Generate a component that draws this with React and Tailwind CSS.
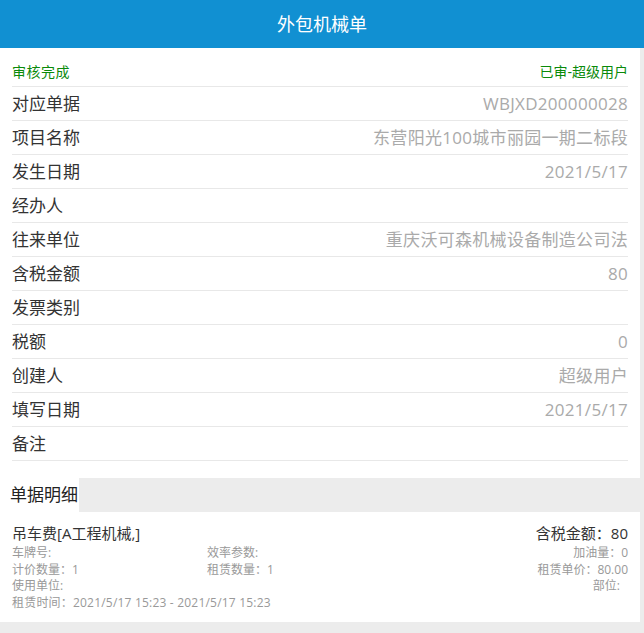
export default function App() {
  const rows = [
    ["对应单据", "WBJXD200000028"],
    ["项目名称", "东营阳光100城市丽园一期二标段"],
    ["发生日期", "2021/5/17"],
    ["经办人", ""],
    ["往来单位", "重庆沃可森机械设备制造公司法"],
    ["含税金额", "80"],
    ["发票类别", ""],
    ["税额", "0"],
    ["创建人", "超级用户"],
    ["填写日期", "2021/5/17"],
    ["备注", ""],
  ];
  return (
    <div
      className="w-[644px] h-[633px] bg-[#ececec] overflow-hidden"
      style={{ fontFamily: '"Open Sans", "Noto Sans CJK SC", sans-serif' }}
    >
      <div className="h-[48px] bg-[#1190d2] flex items-center justify-center text-white text-[18px]">
        外包机械单
      </div>
      <div className="w-[640px] bg-white pb-[17px]">
        <div className="mx-[12px] h-[39px] pt-[8px] flex items-center justify-between border-b border-[#e8e8e8] text-[14px] text-[#0a8a0a]">
          <span className="tracking-[0.5px]">审核完成</span>
          <span>已审-超级用户</span>
        </div>
        {rows.map(([k, v]) => (
          <div
            key={k}
            className="mx-[12px] h-[34px] flex items-center justify-between border-b border-[#e8e8e8] text-[17px]"
          >
            <span className="text-[#333]">{k}</span>
            <span className="text-[#aaa] tracking-[0.3px]">{v}</span>
          </div>
        ))}
      </div>
      <div className="h-[34px] flex items-center">
        <div className="h-full bg-white pl-[10px] pr-[1px] flex items-center text-[17px] text-[#222]">
          单据明细
        </div>
      </div>
      <div className="w-[640px] h-[110px] bg-white px-[12px] pt-[10px]">
        <div className="flex justify-between text-[15px] text-[#333] leading-[22px]">
          <span>吊车费[A工程机械,]</span>
          <span>含税金额：80</span>
        </div>
        <div className="text-[12px] text-[#999] leading-[16.6px] pt-[1px]">
          <div className="flex">
            <span className="w-[195px]">车牌号:</span>
            <span className="flex-1">效率参数:</span>
            <span>加油量：0</span>
          </div>
          <div className="flex">
            <span className="w-[195px]">计价数量：1</span>
            <span className="flex-1">租赁数量：1</span>
            <span>租赁单价：80.00</span>
          </div>
          <div className="flex">
            <span className="flex-1">使用单位:</span>
            <span className="pr-[8px]">部位:</span>
          </div>
          <div className="flex">
            <span className="tracking-[0.2px]">租赁时间：2021/5/17 15:23 - 2021/5/17 15:23</span>
          </div>
        </div>
      </div>
    </div>
  );
}
